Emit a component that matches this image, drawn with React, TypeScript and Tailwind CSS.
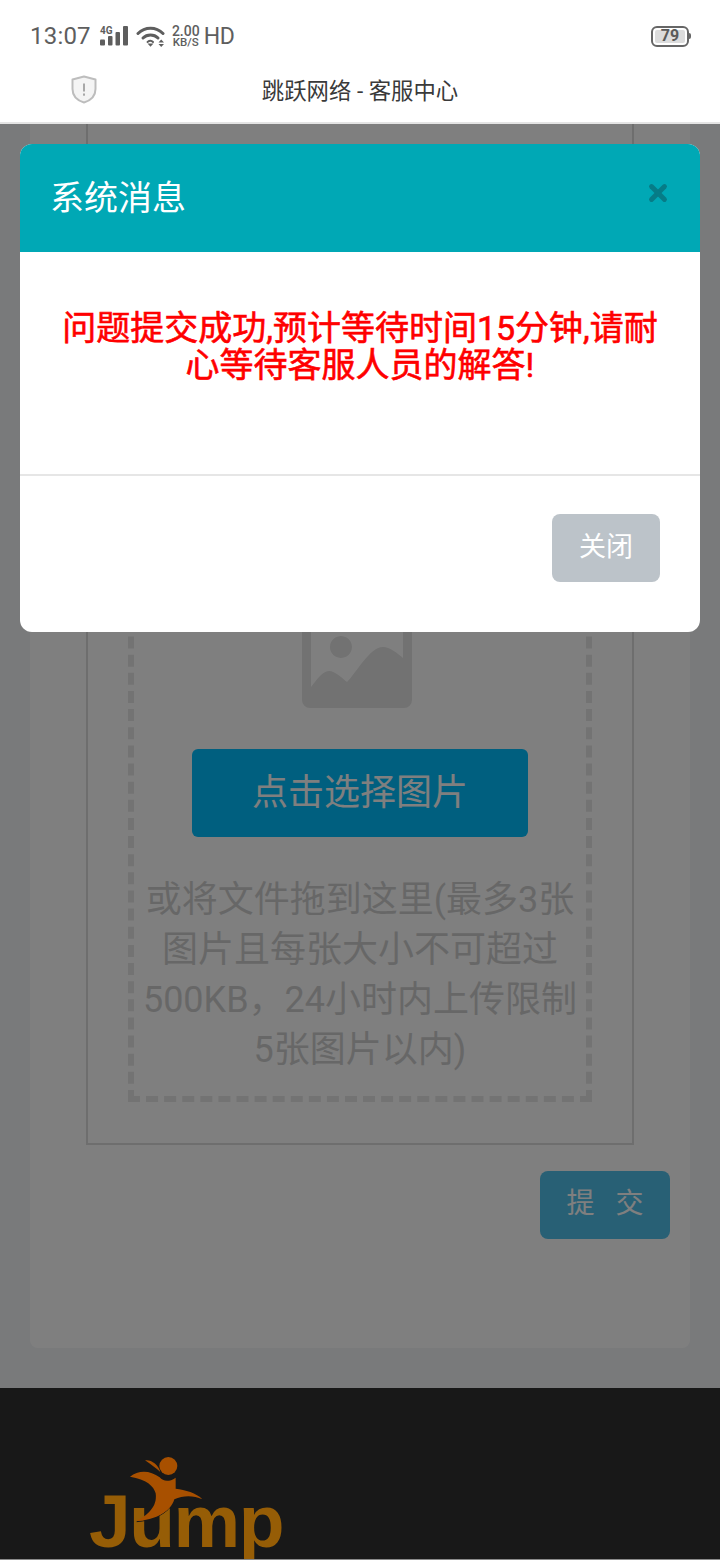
import { X } from 'lucide-react'

const fontStack = { fontFamily: 'Roboto, "Noto Sans CJK SC", sans-serif' }

function StatusBar() {
  return (
    <div className="flex h-[62px] items-center justify-between pl-[30px] pr-[29px] pt-[10px] text-[#5e5e5e]">
      <div className="flex items-center">
        <span className="text-[24px] leading-none tracking-[0.2px]">13:07</span>
        {/* signal */}
        <svg width="28" height="20" viewBox="0 0 28 20" className="ml-[9px] overflow-visible" fill="#5e5e5e">
          <text x="0" y="7.5" fontSize="10" fontWeight="700" fontFamily="Roboto, sans-serif">4G</text>
          <rect x="0" y="13.5" width="5" height="6" rx="1" />
          <rect x="8" y="10" width="4.5" height="9.5" rx="1" />
          <rect x="15.5" y="6" width="4.5" height="13.5" rx="1" />
          <rect x="23" y="0" width="5" height="19.5" rx="1" />
        </svg>
        {/* wifi */}
        <svg width="29" height="21" viewBox="0 0 29 21" className="ml-[8px]" fill="none" stroke="#5e5e5e" strokeWidth="3" strokeLinecap="round">
          <path d="M2 7.5C9 0.5 20 0.5 27 7.5" />
          <path d="M7 12C11 8 18 8 22 12" />
          <path d="M11.5 16C13.5 14.5 15.5 14.5 17 16" strokeWidth="2" />
          <path d="M11.5 17.5L14.5 20.8L17.5 17.5Z" fill="#5e5e5e" stroke="none" />
          <path d="M22.5 16.5L28 16.5L25.2 13.5Z M22.5 18L28 18L25.2 21Z" fill="#5e5e5e" stroke="none" />
        </svg>
        <div className="ml-[7px] flex w-[28px] flex-col items-center font-medium leading-none">
          <span className="text-[14px] leading-[12px]">2.00</span>
          <span className="text-[11.5px] leading-[11px]">KB/S</span>
        </div>
        <span className="ml-[4px] text-[23px] leading-none tracking-[-0.5px]">HD</span>
      </div>
      {/* battery */}
      <div className="flex items-center">
        <div className="flex h-[21px] w-[38px] items-center justify-center rounded-[6px] border-2 border-[#666666] p-[2px]">
          <div className="flex h-full w-full items-center justify-center rounded-[2px] bg-[#dcdcdc] text-[16px] font-bold leading-none text-[#5a5a5a]">
            79
          </div>
        </div>
        <div className="h-[6px] w-[2px] rounded-r-sm bg-[#666666]" />
      </div>
    </div>
  )
}

function AddressBar() {
  return (
    <div className="relative flex h-[62px] items-center justify-center border-b-2 border-[#e4e4e4] pb-[2px]">
      <svg width="26" height="29" viewBox="0 0 26 29" className="absolute left-[71px] top-[13px]">
        <path d="M13 1.5L24.5 4.5V14C24.5 21 19.5 25.5 13 27.5C6.5 25.5 1.5 21 1.5 14V4.5Z" fill="#f4f4f4" stroke="#bdbdbd" strokeWidth="2" strokeLinejoin="round" />
        <rect x="12" y="8.5" width="2" height="8" fill="#a8a8a8" />
        <rect x="12" y="18.5" width="2" height="2.2" fill="#a8a8a8" />
      </svg>
      <span className="text-[22.4px] leading-none text-[#3a3a3a]">跳跃网络 - 客服中心</span>
    </div>
  )
}

function ImageIcon() {
  return (
    <svg width="110" height="98" viewBox="0 0 110 98">
      <path
        fillRule="evenodd"
        fill="#e4e4e4"
        d="M8 0H102A8 8 0 0 1 110 8V90A8 8 0 0 1 102 98H8A8 8 0 0 1 0 90V8A8 8 0 0 1 8 0ZM9 9V77C14 71 20 61 27 61C33 61 40 68 45 72C55 62 68 37 81 37C88 37 95 43 101 48V9ZM39 26A11 11 0 1 1 38.9 26Z"
      />
    </svg>
  )
}

function UploadCard() {
  return (
    <div className="mx-[30px] flex h-[1224px] flex-col rounded-b-lg bg-white px-[56px]">
      <div className="flex h-[1021px] flex-col justify-end border-2 border-t-0 border-[#dcdcdc] px-[40px] pb-[41px]">
        <div className="flex flex-col items-center border-[6px] border-dashed border-[#e6e6e6] px-[6px] pb-[21px]">
          <div className="mb-[41px] mr-[6px] mt-[40px]">
            <ImageIcon />
          </div>
          <div className="flex h-[88px] w-[336px] items-center justify-center rounded-[6px] bg-[#00beff] text-[36px] text-white">
            点击选择图片
          </div>
          <p className="mt-[38px] w-full text-center text-[36px] leading-[50px] text-[#cfcfcf]">
            或将文件拖到这里(最多3张图片且每张大小不可超过500KB，24小时内上传限制5张图片以内)
          </p>
        </div>
      </div>
      <div className="mt-[26px] flex justify-end">
        <div className="-mr-[36px] flex h-[68px] w-[130px] items-center justify-center gap-[21px] rounded-lg bg-[#50c0ea] pb-[2px] text-[28px] text-white">
          <span>提</span>
          <span>交</span>
        </div>
      </div>
    </div>
  )
}

function JumpLogo() {
  return (
    <div className="relative z-10 h-[172px] overflow-hidden border-b border-[#8a8a8a] bg-[#181818]">
      <span
        className="absolute left-[89px] top-[90px] text-[75px] font-bold leading-[86px] tracking-[-1.5px] text-[#965d06]"
        style={{ fontFamily: '"Liberation Sans", sans-serif' }}
      >
        Jump
      </span>
      <svg width="80" height="70" viewBox="120 20 240 210" className="absolute left-[125px] top-[68px]">
        <circle cx="250" cy="50" r="27" fill="#a85000" />
        <path d="M180 33C198 30 220 45 226 68C213 56 198 46 180 33Z" fill="#a85000" />
        {/* dark edge only where the leg crosses the lettering */}
        <path d="M155 217C200 214 250 195 270 152" fill="none" stroke="#181818" strokeWidth="3" />
        <path
          d="M135 82C160 62 195 62 224 84C234 95 250 100 272 85L272 118C300 122 335 130 352 150C325 138 295 138 268 150C258 185 215 212 155 215C185 198 218 175 212 132C206 110 185 90 135 82Z"
          fill="#a85000"
        />
      </svg>
    </div>
  )
}

function MessageModal() {
  return (
    <div className="absolute left-[20px] right-[20px] top-[20px] z-20 h-[488px] overflow-hidden rounded-xl bg-white">
      <div className="flex h-[108px] items-center justify-between bg-[#00a8b5] pl-[30px] pr-[29px]">
        <span className="text-[34px] leading-none text-white">系统消息</span>
        <X size={26} strokeWidth={4.5} className="-mt-[10px] text-[#067c87]" />
      </div>
      <div className="flex h-[224px] justify-center border-b-2 border-[#e6e6e6] px-[40px] pt-[58px]">
        <p className="text-center text-[34px] leading-[37px] text-[#ff0000] [-webkit-text-stroke:0.6px_#ff0000]">
          问题提交成功,预计等待时间15分钟,请耐心等待客服人员的解答!
        </p>
      </div>
      <div className="flex justify-end pr-[40px] pt-[38px]">
        <div className="flex h-[68px] w-[108px] items-center justify-center rounded-lg bg-[#bcc3c9] pb-[2px] text-[27px] text-white">
          关闭
        </div>
      </div>
    </div>
  )
}

export default function App() {
  return (
    <div className="flex h-[1560px] w-[720px] flex-col overflow-hidden bg-white" style={fontStack}>
      <StatusBar />
      <AddressBar />
      <div className="relative flex-1 bg-[#f2f4f7]">
        <UploadCard />
        <div className="h-[40px]" />
        <JumpLogo />
        <div className="absolute inset-0 bg-black/50" />
        <MessageModal />
      </div>
    </div>
  )
}
